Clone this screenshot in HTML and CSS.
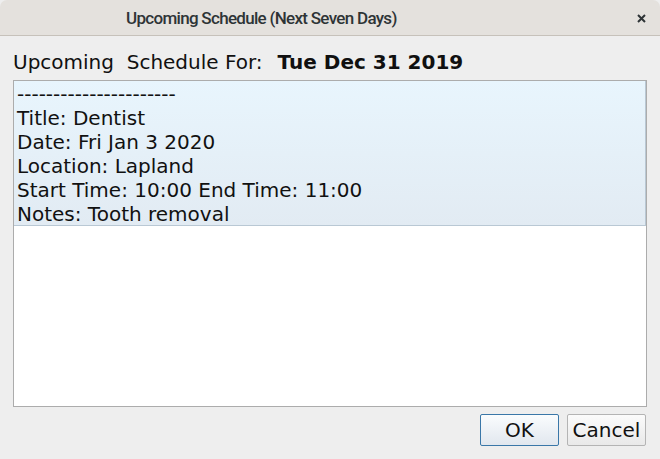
FILE: index.html
```html
<!DOCTYPE html>
<html>
<head>
<meta charset="utf-8">
<link rel="stylesheet" href="styles.css">
</head>
<body>
<div class="window">
  <div class="titlebar">
    <span class="title">Upcoming Schedule (Next Seven Days)</span>
    <span class="close">
      <svg width="9" height="9" viewBox="0 0 9 9"><path d="M1 1 L8 8 M8 1 L1 8" stroke="#2e3436" stroke-width="2"/></svg>
    </span>
  </div>
  <div class="content">
    <div class="header"><span class="label">Upcoming&nbsp; Schedule For:</span><span class="date">Tue Dec 31 2019</span></div>
    <div class="list">
      <div class="item">
        <div class="line">----------------------</div>
        <div class="line">Title: Dentist</div>
        <div class="line">Date: Fri Jan 3 2020</div>
        <div class="line">Location: Lapland</div>
        <div class="line">Start Time: 10:00 End Time: 11:00</div>
        <div class="line">Notes: Tooth removal</div>
      </div>
    </div>
    <div class="buttons">
      <button class="btn default">OK</button>
      <button class="btn">Cancel</button>
    </div>
  </div>
</div>
</body>
</html>
```
FILE: styles.css
```css
html, body {
  margin: 0;
  padding: 0;
  background: #eeeeee;
}
.window {
  width: 660px;
  height: 459px;
  display: flex;
  flex-direction: column;
  background: #eeeeee;
  font-family: "DejaVu Sans", sans-serif;
  color: #101010;
}
.titlebar {
  height: 36px;
  box-sizing: border-box;
  border-bottom: 1px solid #c6c1ba;
  background: #e4e1dd;
  border-radius: 7px 7px 0 0;
  display: flex;
  align-items: center;
  padding-left: 126px;
  position: relative;
}
.title {
  font-family: "Roboto", sans-serif;
  font-weight: 500;
  font-size: 17px;
  letter-spacing: -0.7px;
  color: #2e3436;
  padding-top: 1px;
}
.close {
  position: absolute;
  right: 14px;
  top: 14px;
  width: 9px;
  height: 9px;
  display: flex;
}
.content {
  flex: 1;
  display: flex;
  flex-direction: column;
  padding: 0 13px 13px 13px;
}
.header {
  height: 44px;
  display: flex;
  align-items: center;
  font-size: 20px;
  padding-top: 7px;
  box-sizing: border-box;
}
.label {
  margin-right: 15px;
}
.date {
  font-weight: bold;
}
.list {
  height: 327px;
  box-sizing: border-box;
  border: 1px solid #acacac;
  background: #ffffff;
}
.item {
  background: linear-gradient(#e8f5fd, #e2ebf3);
  border-bottom: 1px solid #b9c8d4;
  border-right: 1px solid #b9c8d4;
  padding: 1px 0 0 3px;
}
.line {
  height: 24px;
  line-height: 24px;
  font-size: 20px;
  white-space: nowrap;
  color: #111;
}
.line:last-child {
  height: 23px;
}
.buttons {
  display: flex;
  justify-content: flex-end;
  gap: 8px;
  padding-top: 7px;
  padding-right: 1px;
}
.btn {
  width: 79px;
  height: 32px;
  box-sizing: border-box;
  font-family: "DejaVu Sans", sans-serif;
  font-size: 20px;
  color: #111;
  border: 1px solid #b4b4b4;
  border-radius: 2px;
  background: linear-gradient(#fbfbfb, #e9e9e9);
  padding: 0;
}
.btn.default {
  border-color: #3a77a8;
  background: linear-gradient(#fafcfd, #e1e7ee);
}
```
